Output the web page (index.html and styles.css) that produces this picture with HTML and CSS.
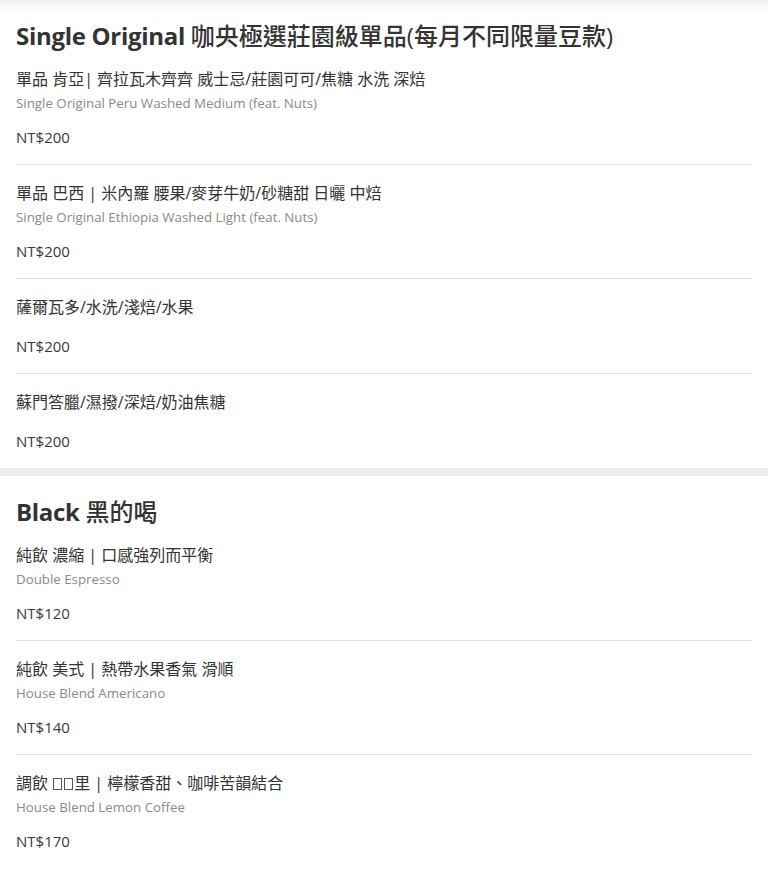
FILE: index.html
```html
<!DOCTYPE html>
<html lang="zh-Hant">
<head>
<meta charset="utf-8">
<title>Menu</title>
<link rel="stylesheet" href="styles.css">
</head>
<body>
<main class="menu">
  <section class="category first">
    <h2 class="cat-title">Single Original <span class="cjk">咖央極選莊園級單品(每月不同限量豆款)</span></h2>
    <div class="item">
      <div class="name">單品 肯亞| 齊拉瓦木齊齊 威士忌/莊園可可/焦糖 水洗 深焙</div>
      <div class="sub">Single Original Peru Washed Medium (feat. Nuts)</div>
      <div class="price">NT$200</div>
    </div>
    <div class="item">
      <div class="name">單品 巴西 | 米內羅 腰果/麥芽牛奶/砂糖甜 日曬 中焙</div>
      <div class="sub">Single Original Ethiopia Washed Light (feat. Nuts)</div>
      <div class="price">NT$200</div>
    </div>
    <div class="item">
      <div class="name">薩爾瓦多/水洗/淺焙/水果</div>
      <div class="price">NT$200</div>
    </div>
    <div class="item">
      <div class="name">蘇門答臘/濕撥/深焙/奶油焦糖</div>
      <div class="price">NT$200</div>
    </div>
  </section>
  <section class="category">
    <h2 class="cat-title">Black <span class="cjk">黑的喝</span></h2>
    <div class="item">
      <div class="name">純飲 濃縮 | 口感強列而平衡</div>
      <div class="sub">Double Espresso</div>
      <div class="price">NT$120</div>
    </div>
    <div class="item">
      <div class="name">純飲 美式 | 熱帶水果香氣 滑順</div>
      <div class="sub">House Blend Americano</div>
      <div class="price">NT$140</div>
    </div>
    <div class="item">
      <div class="name">調飲 <span class="tofu"></span><span class="tofu"></span>里 | 檸檬香甜、咖啡苦韻結合</div>
      <div class="sub">House Blend Lemon Coffee</div>
      <div class="price">NT$170</div>
    </div>
  </section>
</main>
</body>
</html>
```
FILE: styles.css
```css
html, body {
  margin: 0;
  padding: 0;
  background: #fff;
}
body {
  font-family: "Open Sans", "Noto Sans CJK TC", sans-serif;
  color: #333;
}
.menu {
  display: flex;
  flex-direction: column;
  gap: 8px;
  background: #ebebeb;
}
.category {
  background: #fff;
  padding: 20px 16px 0;
}
.category.first {
  background: linear-gradient(#f0f0f0 0, #fafafa 8px, #fff 16px);
}
.cat-title {
  margin: 0;
  font-size: 24px;
  line-height: 31px;
  font-weight: 700;
  color: #333;
  letter-spacing: -0.3px;
}
.cat-title .cjk {
  font-weight: 500;
  letter-spacing: 0;
}
.item {
  padding: 16px 0 15px;
}
.item + .item {
  border-top: 1px solid #e0e0e0;
}
.name {
  font-size: 16px;
  line-height: 24px;
  color: #333;
}
.sub {
  padding-top: 3px;
  font-size: 13.3px;
  line-height: 19px;
  color: #8a8a8a;
}
.price {
  margin-top: 12px;
  font-size: 15px;
  line-height: 24px;
  color: #3a3a3a;
}
.name + .price {
  margin-top: 15px;
}
.tofu {
  display: inline-block;
  width: 7px;
  height: 10px;
  border: 1px solid #555;
  margin: 0 1px;
  vertical-align: -1px;
}
```
